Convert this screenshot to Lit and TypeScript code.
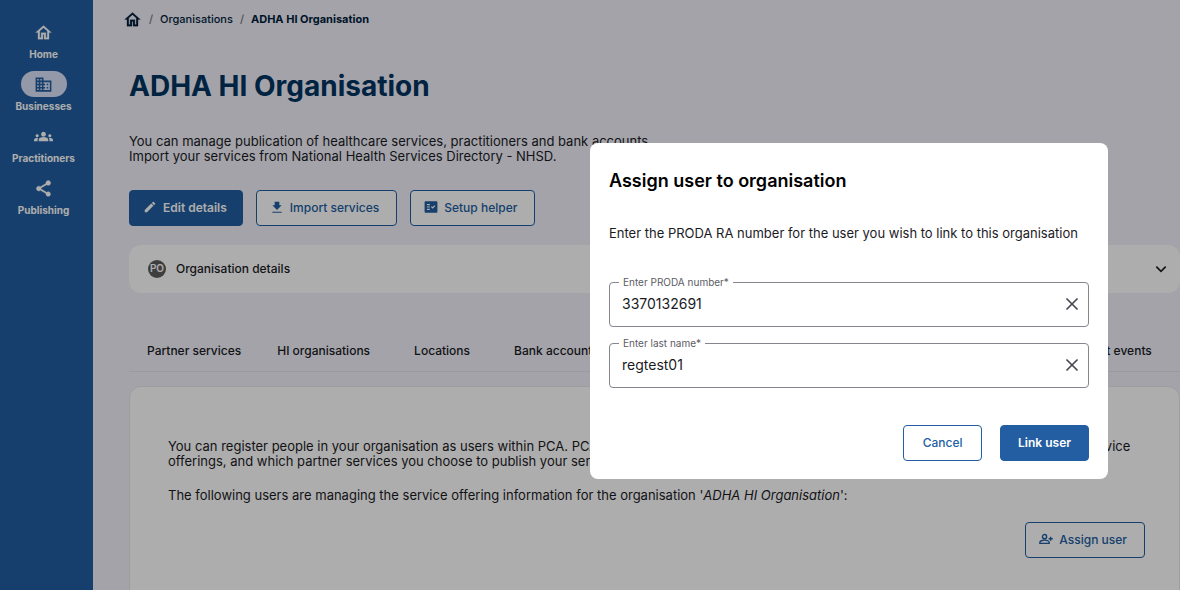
import { LitElement, html, css, svg } from "lit";
import { customElement, state } from "lit/decorators.js";
import { classMap } from "lit/directives/class-map.js";

const ICONS = {
  home: svg`<path stroke="currentColor" stroke-width="0.3" d="M12 3L2 12h3v8.500h6.300V14.500h1.400v6H19V12h3L12 3zm0 2.900l4.700 4.250V18.200h-1.700v-6H9v6H7.300v-8.050L12 5.900z"/>`,
  business: svg`<path d="M12 7V3H2v18h20V7H12zM6 19H4v-2h2v2zm0-4H4v-2h2v2zm0-4H4V9h2v2zm0-4H4V5h2v2zm4 12H8v-2h2v2zm0-4H8v-2h2v2zm0-4H8V9h2v2zm0-4H8V5h2v2zm10 12h-8v-2h2v-2h-2v-2h2v-2h-2V9h8v10zm-2-8h-2v2h2v-2zm0 4h-2v2h2v-2z"/>`,
  groups: svg`<path d="M12 12.750c1.630 0 3.070.39 4.240.9 1.080.48 1.760 1.560 1.760 2.730V18H6v-1.610c0-1.180.68-2.260 1.760-2.730 1.170-.52 2.610-.91 4.240-.91zM4 13c1.100 0 2-.9 2-2s-.9-2-2-2-2 .9-2 2 .9 2 2 2zm1.130 1.100c-.37-.06-.74-.1-1.130-.1-.99 0-1.930.21-2.780.58C.48 14.900 0 15.620 0 16.430V18h4.500v-1.610c0-.83.23-1.610.63-2.290zM20 13c1.100 0 2-.9 2-2s-.9-2-2-2-2 .9-2 2 .9 2 2 2zm4 3.430c0-.81-.48-1.530-1.220-1.850-.85-.37-1.790-.58-2.780-.58-.39 0-.76.04-1.130.1.4.68.63 1.460.63 2.290V18H24v-1.570zM12 6c1.660 0 3 1.340 3 3s-1.340 3-3 3-3-1.340-3-3 1.340-3 3-3z"/>`,
  share: svg`<path stroke="currentColor" stroke-width="0.5" d="M18 16.080c-.76 0-1.440.3-1.960.77L8.910 12.700c.05-.23.09-.46.09-.7s-.04-.47-.09-.7l7.050-4.110c.54.5 1.250.81 2.040.81 1.660 0 3-1.340 3-3s-1.340-3-3-3-3 1.340-3 3c0 .24.04.47.09.7L8.040 9.810C7.500 9.310 6.790 9 6 9c-1.660 0-3 1.340-3 3s1.340 3 3 3c.79 0 1.500-.31 2.040-.81l7.120 4.160c-.05.21-.08.43-.08.65 0 1.610 1.310 2.920 2.920 2.920s2.920-1.310 2.920-2.920-1.310-2.920-2.920-2.920z"/>`,
  edit: svg`<path d="M3 17.250V21h3.750L17.810 9.940l-3.750-3.750L3 17.250zM20.710 7.040c.39-.39.39-1.020 0-1.410l-2.340-2.340c-.39-.39-1.020-.39-1.410 0l-1.830 1.830 3.750 3.750 1.830-1.830z"/>`,
  download: svg`<path d="M4 22h16v-2H4v2zM20 9h-4V3H8v6H4l8 8 8-8z"/>`,
  check: svg`<path d="M21 2H3c-1.100 0-2 .9-2 2v16c0 1.100.9 2 2 2h18c1.100 0 2-.9 2-2V4c0-1.100-.9-2-2-2zM10 17H5v-2h5v2zm0-4H5v-2h5v2zm0-4H5V7h5v2zm4.820 6L12 12.160l1.410-1.410 1.410 1.420L17.990 9l1.420 1.420L14.820 15z"/>`,
  addUser: svg`<g fill="none" stroke="currentColor" stroke-width="2.400"><circle cx="9.500" cy="8" r="3.600"/><path d="M1.500 19.500h16v-1.500c0-2.500-4-4-8-4s-8 1.500-8 4v1.500zM20 8v7M16.500 11.500h7"/></g>`,
  chevron: svg`<path d="M4 8l8 8 8-8" fill="none" stroke="currentColor" stroke-width="2.800"/>`,
  close: svg`<path d="M2.500 2.500l19 19M21.500 2.500l-19 19" fill="none" stroke="currentColor" stroke-width="2.800"/>`,
};
type IconName = keyof typeof ICONS;

const icon = (name: IconName, size = "") =>
  html`<svg class="icon ${size}" viewBox="0 0 24 24" fill="currentColor" aria-hidden="true">${ICONS[name]}</svg>`;

const NAV: { label: string; icon: IconName; active?: boolean }[] = [
  { label: "Home", icon: "home" },
  { label: "Businesses", icon: "business", active: true },
  { label: "Practitioners", icon: "groups" },
  { label: "Publishing", icon: "share" },
];

const TABS = ["Partner services", "HI organisations", "Locations", "Bank accounts", "Audit events"];

@customElement("app-root")
export class AppRoot extends LitElement {
  @state() private proda = "3370132691";
  @state() private lastName = "regtest01";

  static styles = css`
    * { box-sizing: border-box; }
    :host {
      display: flex;
      height: 100vh;
      overflow: hidden;
      background: #f0f1fa;
      color: #1b1b1f;
      font: 13px/15px Inter, "Liberation Sans", sans-serif;
    }
    h1, h2, p, ol { margin: 0; padding: 0; }
    a { color: inherit; text-decoration: none; }
    button, input { font: inherit; color: inherit; margin: 0; }
    button { cursor: pointer; }
    .icon { width: 14px; height: 14px; flex: none; display: block; }
    .icon.large { width: 19px; height: 19px; }

    .rail {
      flex: none;
      width: 93px;
      background: #225ea1;
      color: #fff;
      display: flex;
      flex-direction: column;
      align-items: stretch;
      gap: 10px;
      padding-top: 19px;
    }
    .nav-item {
      display: flex;
      flex-direction: column;
      align-items: center;
      gap: 2px;
      margin-right: 6px;
      font-size: 10px;
      line-height: 14px;
      font-weight: 700;
    }
    .pill {
      width: 46px;
      height: 26px;
      border-radius: 13px;
      display: grid;
      place-items: center;
    }
    .nav-item.active .pill { background: #dae2f9; color: #225ea1; }

    main { flex: 1; min-width: 0; padding-left: 36px; }
    .crumbs {
      list-style: none;
      display: flex;
      align-items: center;
      gap: 7px;
      height: 38px;
      margin-left: -6px;
      font-size: 11px;
      font-weight: 500;
      color: #001c3a;
    }
    .crumbs li { display: flex; align-items: center; gap: 7px; }
    .crumbs li + li::before { content: "/"; color: #74777f; }
    .crumbs [aria-current] { font-weight: 700; }
    h1 {
      margin-top: 30px;
      font-size: 28px;
      line-height: 36px;
      font-weight: 700;
      color: #003462;
    }
    .lead { margin-top: 30px; }
    .actions { display: flex; gap: 13px; margin-top: 26px; }
    .btn {
      display: inline-flex;
      align-items: center;
      justify-content: center;
      gap: 6px;
      height: 36px;
      padding: 0 17px 2px 13px;
      border: 1px solid #225ea1;
      border-radius: 4px;
      background: #fff;
      color: #225ea1;
      font-size: 12px;
      font-weight: 500;
    }
    .btn.primary { padding-right: 15px; background: #225ea1; color: #fff; font-weight: 600; }
    .btn.plain { min-width: 79px; padding: 0 17px 2px; }

    .details {
      display: flex;
      align-items: center;
      gap: 10px;
      width: 100%;
      height: 48px;
      margin-top: 19px;
      padding: 0 12px 1px 19px;
      border: 0;
      border-radius: 12px;
      background: #fff;
      font-size: 12px;
      font-weight: 500;
      text-align: left;
    }
    .details .label { flex: 1; }
    .avatar {
      width: 18px;
      height: 18px;
      border-radius: 50%;
      background: #5c5c5c;
      color: #fff;
      font-size: 10px;
      font-weight: 600;
      display: grid;
      place-items: center;
    }
    .tabs {
      display: flex;
      margin-top: 37px;
      height: 42px;
      border-bottom: 1px solid #e2e2ea;
    }
    .tab {
      min-width: 108px;
      padding: 0 18px;
      border: 0;
      background: none;
      font-size: 12px;
      font-weight: 500;
      white-space: nowrap;
    }
    .tab:last-child { margin-left: auto; margin-right: 10px; }
    .panel {
      margin-top: 14px;
      min-height: 240px;
      padding: 52px 34px 30px 38px;
      border: 1px solid #e8e8ee;
      border-radius: 12px;
      background: #fff;
    }
    .panel p + p { margin-top: 19px; }
    .panel-actions { display: flex; justify-content: flex-end; margin-top: 19px; }

    .scrim {
      position: fixed;
      inset: 0;
      display: flex;
      align-items: center;
      justify-content: flex-end;
      padding: 32px 72px 0 0;
      background: rgba(0, 0, 0, 0.32);
    }
    .dialog {
      width: 518px;
      max-width: 100%;
      padding: 27px 19px 18px;
      border-radius: 8px;
      background: #fff;
      color: #1b1b1f;
    }
    h2 { font-size: 18px; line-height: 22px; font-weight: 600; color: #000; }
    .prompt { margin-top: 34px; }
    .fields { display: grid; gap: 16px; margin-top: 41px; }
    .field {
      position: relative;
      display: flex;
      align-items: center;
      height: 45px;
      padding: 0 9px 2px 12px;
      border: 1px solid #85858d;
      border-radius: 4px;
    }
    .field label {
      position: absolute;
      top: -8px;
      left: 9px;
      padding: 0 4px;
      background: #fff;
      color: #5b5c63;
      font-size: 10px;
      line-height: 14px;
    }
    .field input {
      flex: 1;
      min-width: 0;
      padding: 0;
      border: 0;
      outline: 0;
      background: none;
      font-size: 14px;
      line-height: 20px;
    }
    .clear { padding: 0; border: 0; background: none; color: #44474e; }
    .dialog-actions { display: flex; justify-content: flex-end; gap: 18px; margin-top: 37px; }
  `;

  render() {
    return html`
      <nav class="rail" aria-label="Main">
        ${NAV.map(
          (n) => html`<a href="#" class=${classMap({ "nav-item": true, active: !!n.active })}>
            <span class="pill">${icon(n.icon, "large")}</span>${n.label}
          </a>`
        )}
      </nav>
      <main>
        <nav aria-label="Breadcrumb">
          <ol class="crumbs">
            <li><a href="#" aria-label="Home">${icon("home", "large")}</a></li>
            <li><a href="#">Organisations</a></li>
            <li><a href="#" aria-current="page">ADHA HI Organisation</a></li>
          </ol>
        </nav>
        <h1>ADHA HI Organisation</h1>
        <p class="lead">
          You can manage publication of healthcare services, practitioners and bank accounts.<br />
          Import your services from National Health Services Directory - NHSD.
        </p>
        <div class="actions">
          <button class="btn primary">${icon("edit")}Edit details</button>
          <button class="btn">${icon("download")}Import services</button>
          <button class="btn">${icon("check")}Setup helper</button>
        </div>
        <button class="details" aria-expanded="false">
          <span class="avatar">PO</span><span class="label">Organisation details</span>${icon("chevron")}
        </button>
        <div class="tabs" role="tablist">
          ${TABS.map((t) => html`<button class="tab" role="tab">${t}</button>`)}
        </div>
        <section class="panel">
          <p>
            You can register people in your organisation as users within PCA. PCA users can manage your organisation
            details, your locations and the healthcare service offerings, and which partner services you choose to
            publish your services to.
          </p>
          <p>
            The following users are managing the service offering information for the organisation
            '<em>ADHA HI Organisation</em>':
          </p>
          <div class="panel-actions"><button class="btn">${icon("addUser")}Assign user</button></div>
        </section>
      </main>
      <div class="scrim">
        <div class="dialog" role="dialog" aria-modal="true" aria-labelledby="dialog-title">
          <h2 id="dialog-title">Assign user to organisation</h2>
          <p class="prompt">Enter the PRODA RA number for the user you wish to link to this organisation</p>
          <div class="fields">
            <div class="field">
              <label for="proda">Enter PRODA number*</label>
              <input id="proda" .value=${this.proda}
                @input=${(e: Event) => (this.proda = (e.target as HTMLInputElement).value)} />
              <button class="clear" aria-label="Clear PRODA number" @click=${() => (this.proda = "")}>${icon("close")}</button>
            </div>
            <div class="field">
              <label for="last">Enter last name*</label>
              <input id="last" .value=${this.lastName}
                @input=${(e: Event) => (this.lastName = (e.target as HTMLInputElement).value)} />
              <button class="clear" aria-label="Clear last name" @click=${() => (this.lastName = "")}>${icon("close")}</button>
            </div>
          </div>
          <div class="dialog-actions">
            <button class="btn plain">Cancel</button>
            <button class="btn plain primary">Link user</button>
          </div>
        </div>
      </div>
    `;
  }
}
